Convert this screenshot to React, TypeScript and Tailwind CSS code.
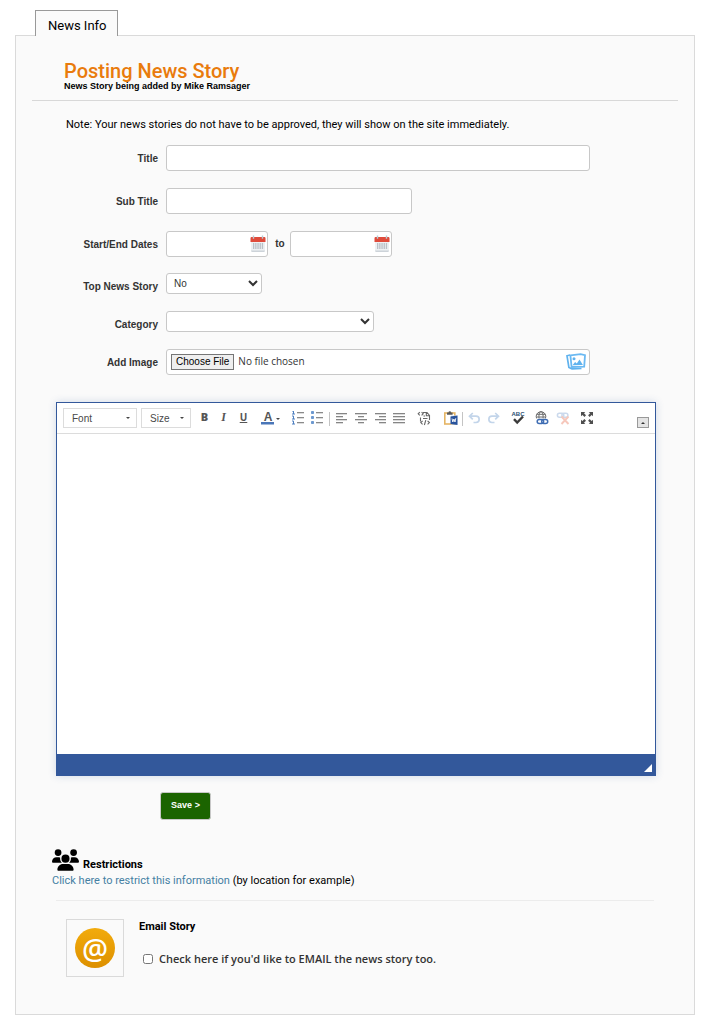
import React, { useState } from 'react';
import { FaUsers } from 'react-icons/fa6';

type ToolProps = {
  label: string;
  className?: string;
  children: React.ReactNode;
};

const Tool: React.FC<ToolProps> = ({ label, className = 'w-[19px]', children }) => (
  <button
    type="button"
    aria-label={label}
    className={`flex h-5 shrink-0 items-center justify-center text-[#555] ${className}`}
  >
    {children}
  </button>
);

const Divider: React.FC = () => <span className="mt-1 mr-0.5 h-3.5 w-px shrink-0 bg-[#c4c4c4]" />;

const Lines: React.FC<{ rows: [number, number][] }> = ({ rows }) => (
  <svg width="12" height="12" viewBox="0 0 12 12">
    {rows.map(([x, w], i) => (
      <rect key={i} x={x} y={1 + i * 3} width={w} height="1.3" fill="#858585" />
    ))}
  </svg>
);

const ListIcon: React.FC<{ numbered?: boolean }> = ({ numbered }) => (
  <svg width="14" height="14" viewBox="0 0 14 14">
    {[1, 6, 11].map((y) => (
      <g key={y}>
        <rect x="6" y={y} width="7" height="1.3" fill="#8a8a8a" />
        {numbered ? (
          <path d={`M1 ${y - 1}h1.5v3M1 ${y + 2}h3`} stroke="#4d7fc0" fill="none" strokeWidth="1" />
        ) : (
          <rect x="1" y={y - 1} width="3" height="3" rx="0.8" fill="#6c98cf" />
        )}
      </g>
    ))}
  </svg>
);

const SourceIcon = () => (
  <svg width="15" height="15" viewBox="0 0 15 15" fill="none" stroke="#666" strokeWidth="1.1">
    <path d="M6 1.5h4l2.5 3V9M9.3 1.5v3.3h3.2M6.5 5H8M6 7.5h4.5M3.5 6.5v4" />
    <path d="M2.8 1.2 1.2 2.8l1.6 1.6M4.6 1.2l1.6 1.6-1.6 1.6" />
    <path d="M5.6 9.8 3.8 11.6l1.8 1.8M10.6 9.8l1.8 1.8-1.8 1.8M8.8 9.2l-1.4 4.8" />
  </svg>
);

const PasteIcon = () => (
  <svg width="14" height="14" viewBox="0 0 14 14">
    <rect x="0.8" y="2" width="10" height="11" fill="#fff" stroke="#e5b564" strokeWidth="1.6" />
    <path d="M3 3.8V1.5h1.5a1.3 1.3 0 0 1 2.6 0h1.5v2.3z" fill="#5a5a5a" />
    <path d="M7 4.5h6.5v9H7z" fill="#dbe4f2" />
    <path d="m6.5 5.5 7-1v9.5l-7-1z" fill="#28539c" />
    <path d="m8 7.5.8 3.5 1.1-3 1.1 3 .8-3.8" stroke="#fff" strokeWidth="0.9" fill="none" />
  </svg>
);

const TurnIcon: React.FC<{ flip?: boolean }> = ({ flip }) => (
  <svg
    width="13"
    height="12"
    viewBox="0 0 13 12"
    fill="none"
    stroke="#c3d5ea"
    strokeWidth="1.7"
    className={flip ? '-scale-x-100' : ''}
  >
    <path d="M4.8 1 1.5 4.2l3.3 3.2M2 4.2h6a3.1 3.1 0 0 1 0 6.3H5.5" />
  </svg>
);

const SpellIcon = () => (
  <svg width="14" height="14" viewBox="0 0 14 14" className="overflow-visible">
    <text x="7" y="5" textAnchor="middle" fontSize="6" fontWeight="700" fontFamily="Liberation Sans, sans-serif" fill="#2b4d74">
      ABC
    </text>
    <path d="m3 8.2 3.2 3.3L12 5.5" fill="none" stroke="#3b3b3b" strokeWidth="2.4" />
  </svg>
);

const ChainShape: React.FC<{ color: string }> = ({ color }) => (
  <g fill="none" stroke={color} strokeWidth="1.5">
    <rect x="0.8" y="0.8" width="6.4" height="4" rx="2" />
    <rect x="5.3" y="0.8" width="6" height="4" rx="2" />
  </g>
);

const LinkIcon = () => (
  <svg width="14" height="14" viewBox="0 0 14 14">
    <g fill="none" stroke="#6a6a6a" strokeWidth="1">
      <circle cx="6" cy="5.5" r="4.8" />
      <ellipse cx="6" cy="5.5" rx="2.1" ry="4.8" />
      <path d="M1.5 3.3h9M1.3 6h9.4" />
    </g>
    <path d="M1 7.5h13v6H1z" fill="#fff" />
    <g transform="translate(1.4 7.8)">
      <ChainShape color="#3f6db3" />
    </g>
  </svg>
);

const UnlinkIcon = () => (
  <svg width="14" height="14" viewBox="0 0 14 14">
    <g transform="translate(.6 1.4)">
      <ChainShape color="#cbd9ec" />
    </g>
    <path d="m5.5 5.5 7 7.5M12.5 5.5l-7 7.5" stroke="#f6c7bb" strokeWidth="1.9" />
  </svg>
);

const MaximizeIcon = () => (
  <svg width="12" height="12" viewBox="0 0 12 12">
    <g fill="#4f4f4f">
      <path d="M0 0h4.3L3 1.3l2 2L3.5 4.9l-2-2L0 4.3z" />
      <path d="M12 0v4.3l-1.4-1.4-2 2L7.1 3.3l2-2L7.7 0z" />
      <path d="M0 12V7.7l1.4 1.4 2-2L5 8.7l-2 2L4.3 12z" />
      <path d="M12 12H7.7l1.4-1.3-2-2 1.5-1.6 2 2L12 7.7z" />
    </g>
  </svg>
);

const CalendarIcon = () => (
  <svg width="16" height="18" viewBox="0 0 16 18">
    <rect x="1" y="5" width="14" height="12" rx="1" fill="#edf0f3" />
    <path d="M1 15.5h14l-.8 1.5H1.8z" fill="#cdd3d9" />
    <path d="M0.5 3.2A1.2 1.2 0 0 1 1.7 2h12.6a1.2 1.2 0 0 1 1.2 1.2V7H.5z" fill="#df4b3b" />
    <path d="M3.5.5v3.2M12.5.5v3.2" stroke="#b9cbd3" strokeWidth="1.4" />
    <path d="M3 9h10.5M3 11h10.5M3 13h10.5" stroke="#a9b0b8" strokeWidth="1.3" strokeDasharray="1.3 .9" />
  </svg>
);

const PhotosIcon = () => (
  <svg width="20" height="17" viewBox="0 0 20 17">
    <path d="M4 2 1 2.8l1.9 11.6L6 15.8l9.5-.3" fill="none" stroke="#5fb2ee" strokeWidth="1.7" />
    <path d="m4.4 2.4 10.2-1.2 4.4 1-.8 11.4-12.6.4z" fill="#fff" stroke="#6bb9f2" strokeWidth="1.8" />
    <circle cx="8" cy="5.7" r="1.5" fill="#5fb2ee" />
    <path d="m6.5 12.3 2.6-3.2 1.7 1.3 2.7-3.8 3.4 5.4z" fill="#5fb2ee" />
  </svg>
);

const fieldClass =
  'rounded-[3px] border border-[#c8c8c8] bg-white px-2 text-[10px] text-[#333] outline-none';

type RowProps = { id: string; label: string; children: React.ReactNode };

const Row: React.FC<RowProps> = ({ id, label, children }) => (
  <div className="flex items-start gap-2">
    <label
      htmlFor={id}
      className="w-[142px] shrink-0 text-right text-[10px] leading-7 font-bold text-[#333]"
    >
      {label}
    </label>
    {children}
  </div>
);

const DateField: React.FC<{ id: string; label?: string }> = ({ id, label }) => (
  <div className="relative">
    <input id={id} aria-label={label} type="text" className={`${fieldClass} block h-[26px] w-[102px]`} />
    <button type="button" aria-label="Pick a date" className="absolute top-1 right-0.5">
      <CalendarIcon />
    </button>
  </div>
);

const Combo: React.FC<{ label: string; className: string }> = ({ label, className }) => (
  <button
    type="button"
    className={`flex h-5 shrink-0 items-center justify-between border border-[#dcdcdc] pr-1.5 pl-2 text-[10px] text-[#484848] ${className}`}
  >
    {label}
    <svg width="4" height="2" viewBox="0 0 4 2">
      <path d="M0 0h4L2 2z" fill="#444" />
    </svg>
  </button>
);

const Editor: React.FC = () => (
  <section className="mr-[38px] ml-10 border border-[#33589b] bg-white shadow-[0_0_8px_rgba(51,88,155,0.2)]">
    <div className="flex h-[31px] border-b border-[#dcdcdc] px-1.5 pt-[5px]">
      <Combo label="Font" className="w-[74px]" />
      <Combo label="Size" className="ml-1 w-[50px]" />
      <div className="ml-1 flex">
        <Tool label="Bold">
          <span className="pb-0.5 font-['Open_Sans',sans-serif] text-[11px] font-extrabold">B</span>
        </Tool>
        <Tool label="Italic">
          <span className="pb-0.5 font-['Liberation_Serif',serif] text-[12px] font-bold italic">I</span>
        </Tool>
        <Tool label="Underline" className="ml-px w-[19px]">
          <span className="pb-0.5 font-['Open_Sans',sans-serif] text-[10px] font-bold underline">U</span>
        </Tool>
      </div>
      <Tool label="Text color" className="ml-2 w-5">
        <svg width="20" height="16" viewBox="0 -1 20 16" className="overflow-visible">
          <text x="7" y="10" textAnchor="middle" fontSize="12" fontWeight="700" fontFamily="Liberation Sans, sans-serif" fill="#555">
            A
          </text>
          <rect x="0" y="11" width="13" height="2.5" fill="#4a76b8" />
          <path d="M15 7h4l-2 2z" fill="#444" />
        </svg>
      </Tool>
      <div className="ml-[7px] flex">
        <Tool label="Numbered list"><ListIcon numbered /></Tool>
        <Tool label="Bulleted list"><ListIcon /></Tool>
      </div>
      <div className="ml-[3px] flex">
        <Divider />
        <Tool label="Align left"><Lines rows={[[0, 11], [0, 7], [0, 11], [0, 7]]} /></Tool>
        <Tool label="Center"><Lines rows={[[0, 12], [3, 6], [0, 12], [3, 6]]} /></Tool>
        <Tool label="Align right"><Lines rows={[[1, 11], [5, 7], [1, 11], [5, 7]]} /></Tool>
        <Tool label="Justify"><Lines rows={[[0, 12], [0, 12], [0, 12], [0, 12]]} /></Tool>
      </div>
      <Tool label="Source" className="ml-[7px] w-[19px]"><SourceIcon /></Tool>
      <Tool label="Paste from Word" className="ml-[7px] w-[19px]"><PasteIcon /></Tool>
      <div className="ml-0.5 flex">
        <Divider />
        <Tool label="Undo"><TurnIcon /></Tool>
        <Tool label="Redo"><TurnIcon flip /></Tool>
      </div>
      <Tool label="Check spelling" className="ml-[5px] w-[19px]"><SpellIcon /></Tool>
      <Tool label="Link" className="ml-[5px] w-[19px]"><LinkIcon /></Tool>
      <Tool label="Unlink" className="ml-0.5 w-[19px]"><UnlinkIcon /></Tool>
      <Tool label="Maximize" className="ml-[5px] w-[19px]"><MaximizeIcon /></Tool>
      <button
        type="button"
        aria-label="Collapse toolbar"
        className="mt-[9px] ml-auto flex h-[11px] w-3 items-center justify-center border border-[#999] bg-[#e4e4e4]"
      >
        <svg width="4" height="2" viewBox="0 0 4 2">
          <path d="M0 2h4L2 0z" fill="#333" />
        </svg>
      </button>
    </div>
    <textarea aria-label="Story text" className="block h-80 w-full resize-none bg-white p-5 text-[13px] outline-none" />
    <div className="flex h-[21px] items-end justify-end bg-[#33589b] pr-[3px] pb-[3px]">
      <svg width="8" height="8" viewBox="0 0 8 8">
        <path d="M8 0v8H0z" fill="#fff" />
      </svg>
    </div>
  </section>
);

const App: React.FC = () => {
  const [top, setTop] = useState('No');
  const [email, setEmail] = useState(false);

  return (
    <div className="bg-white pt-2.5 pr-[21px] pb-[17px] pl-[15px] font-['Liberation_Sans',Arial,sans-serif] text-black">
      <nav className="flex pl-5">
        <a
          href="#news"
          className="relative -mb-px h-[26px] border border-b-0 border-[#999] bg-[#fafafa] pt-1.5 pr-2.5 pl-3 font-['Roboto',sans-serif] text-[13px] leading-[18px]"
        >
          News Info
        </a>
      </nav>

      <main className="border border-[#dadada] bg-[#fafafa] pb-[37px]">
        <header className="mr-4 ml-4 border-b border-[#d8d8d8] pt-[25px] pb-[9px] pl-8">
          <h1 className="font-['Roboto',sans-serif] text-[20px] leading-5 font-medium text-[#e97b0c]">
            Posting News Story
          </h1>
          <p className="text-[9px] leading-[10px] font-bold">News Story being added by Mike Ramsager</p>
        </header>

        <p className="mt-4 ml-[50px] font-['Roboto',sans-serif] text-[11px] leading-4">
          Note: Your news stories do not have to be approved, they will show on the site immediately.
        </p>

        <form onSubmit={(e) => e.preventDefault()}>
          <div className="mt-3 flex flex-col">
            <Row id="title" label="Title">
              <input id="title" type="text" className={`${fieldClass} mb-[17px] h-[26px] w-[424px]`} />
            </Row>
            <Row id="subtitle" label="Sub Title">
              <input id="subtitle" type="text" className={`${fieldClass} mb-[17px] h-[26px] w-[246px]`} />
            </Row>
            <Row id="start" label="Start/End Dates">
              <div className="mb-4 flex">
                <DateField id="start" />
                <span className="w-[22px] pl-0.5 text-center text-[10px] leading-[26px] font-bold text-[#333]">to</span>
                <DateField id="end" label="End date" />
              </div>
            </Row>
            <Row id="top" label="Top News Story">
              <select
                id="top"
                value={top}
                onChange={(e) => setTop(e.target.value)}
                className="mb-[17px] h-[21px] w-24 rounded-[3px] border border-[#c8c8c8] bg-white px-[3px] text-[10px] text-[#333]"
              >
                <option>No</option>
                <option>Yes</option>
              </select>
            </Row>
            <Row id="category" label="Category">
              <select
                id="category"
                className="mb-[17px] h-[21px] w-52 rounded-[3px] border border-[#c8c8c8] bg-white px-[3px] text-[10px] text-[#333]"
              >
                <option />
              </select>
            </Row>
            <Row id="image" label="Add Image">
              <div className="relative mb-[27px] h-[26px]">
                <input
                  id="image"
                  type="file"
                  className="block h-[26px] w-[424px] rounded-[3px] border border-[#c8c8c8] bg-white px-1 pt-[3px] font-['Open_Sans',sans-serif] text-[10px] leading-4 text-[#333] file:mr-1 file:h-4 file:rounded-none file:border file:border-solid file:border-[#767676] file:bg-[#efefef] file:px-1 file:font-['Liberation_Sans',Arial,sans-serif] file:text-[10px] file:leading-[14px] file:text-black"
                />
                <span className="pointer-events-none absolute top-1 right-1">
                  <PhotosIcon />
                </span>
              </div>
            </Row>
          </div>

          <Editor />

          <button
            type="submit"
            className="mt-4 ml-[144px] block h-7 w-[51px] rounded-[3px] border border-[#c8c8c8] bg-[#1b6400] text-[9px] font-bold text-white"
          >
            Save &gt;
          </button>

          <section className="mt-7 mr-10 ml-9 font-['Roboto',sans-serif] text-[11px]">
            <div className="flex items-end gap-1">
              <FaUsers className="mb-px h-6 w-[27px]" />
              <h2 className="leading-4 font-bold">Restrictions</h2>
            </div>
            <p className="leading-4">
              <a href="#restrict" className="text-[#457fa3]">Click here to restrict this information</a> (by location for
              example)
            </p>
          </section>

          <section className="mt-[11px] mr-10 ml-10 flex border-t border-[#ececec] pt-[18px] pl-2.5">
            <div className="flex h-[58px] w-[58px] shrink-0 items-center justify-center border border-[#dadada]">
              <span className="flex h-10 w-10 items-center justify-center rounded-full bg-linear-to-b from-[#f2ab0c] to-[#dd9000] font-['Noto_Sans',sans-serif] text-[29px] leading-none font-medium text-white">
                @
              </span>
            </div>
            <div className="ml-[15px]">
              <h2 className="font-['Roboto',sans-serif] text-[11px] leading-4 font-bold">Email Story</h2>
              <label className="mt-4 flex items-center font-['Open_Sans',sans-serif] text-[11px] leading-4 font-semibold text-[#333]">
                <input
                  type="checkbox"
                  checked={email}
                  onChange={(e) => setEmail(e.target.checked)}
                  className="mr-1.5 ml-1 h-2.5 w-2.5"
                />
                Check here if you'd like to EMAIL the news story too.
              </label>
            </div>
          </section>
        </form>
      </main>
    </div>
  );
};

export default App;
